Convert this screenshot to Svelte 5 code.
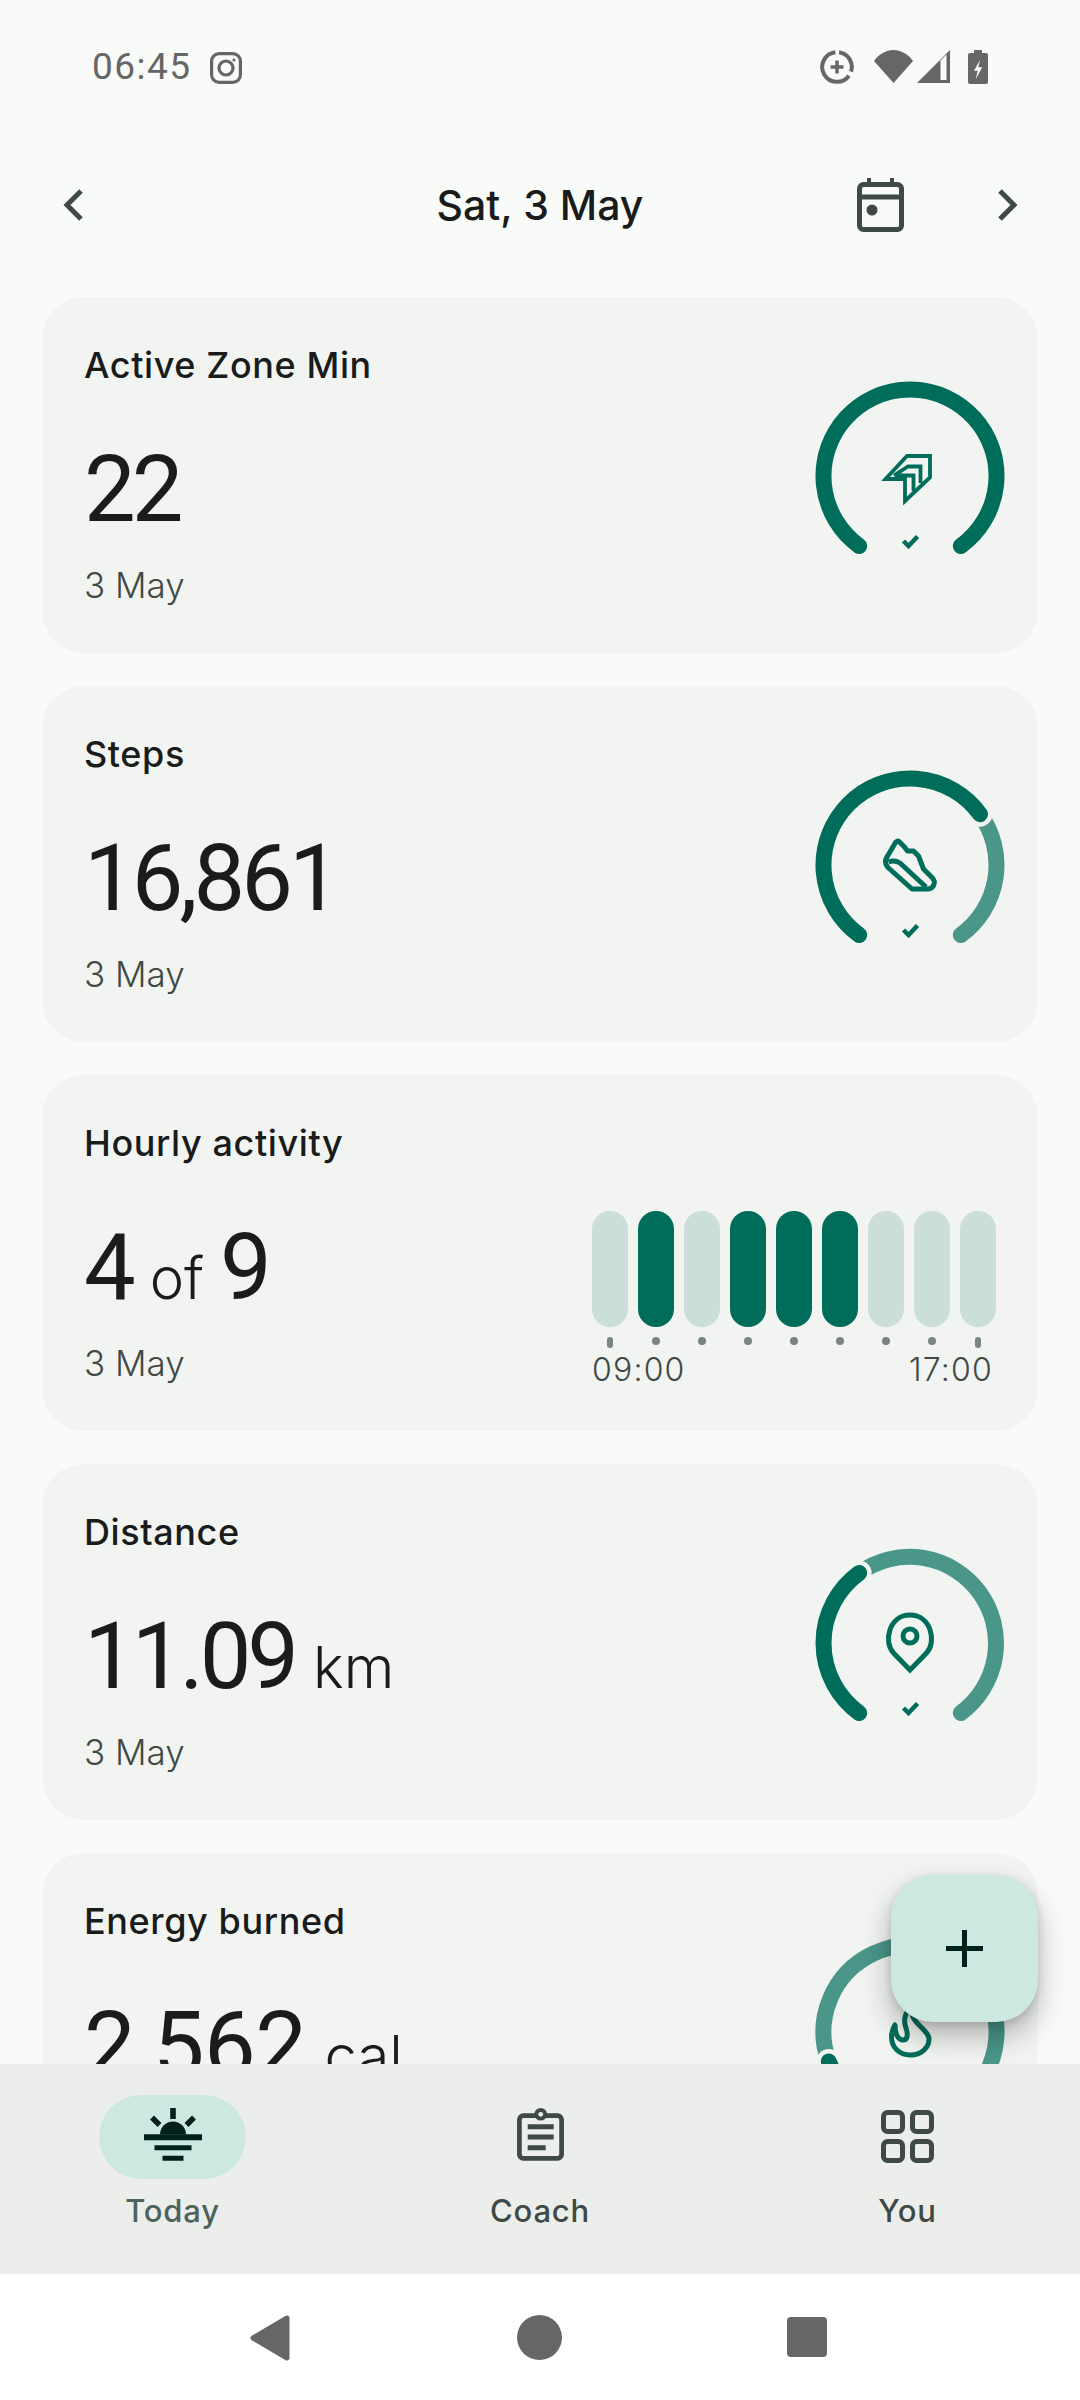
<script>
  const R = 86.5, CX = 95, CY = 95;
  const polar = (cx, cy, r, deg) => {
    const a = (deg * Math.PI) / 180;
    return [cx + r * Math.sin(a), cy - r * Math.cos(a)];
  };
  const pt = (deg) => polar(CX, CY, R, deg);
  const arcOf = (cx, cy, r, from, to) => {
    const [x1, y1] = polar(cx, cy, r, from);
    const [x2, y2] = polar(cx, cy, r, to);
    return `M${x1.toFixed(2)} ${y1.toFixed(2)}A${r} ${r} 0 ${to - from > 180 ? 1 : 0} 1 ${x2.toFixed(2)} ${y2.toFixed(2)}`;
  };
  const arc = (from, to) => arcOf(CX, CY, R, from, to);
  const START = -144, END = 144;
  const bars = [0, 1, 0, 1, 1, 1, 0, 0, 0];
  const cards = [
    { title: 'Active Zone Min', value: '22', unit: '', split: 144, icon: 'zone' },
    { title: 'Steps', value: '16,861', unit: '', split: 54, icon: 'shoe' },
    { title: 'Hourly activity', value: '4', unit: 'of', extra: '9', hourly: true },
    { title: 'Distance', value: '11.09', unit: 'km', split: -36, icon: 'pin' },
    { title: 'Energy burned', value: '2,562', unit: 'cal', split: -110, icon: 'flame', wide: true }
  ];
</script>

<div class="screen">
  <div class="status">
    <div class="status-left">
      <span class="time">06:45</span>
      <svg class="ig" viewBox="0 0 32 32" fill="none" stroke="#666" stroke-width="3.2">
        <rect x="1.6" y="1.6" width="28.8" height="28.8" rx="7.5" />
        <circle cx="16" cy="16" r="7" />
        <circle cx="24" cy="8" r="1.6" fill="#666" stroke="none" />
      </svg>
    </div>
    <div class="status-right">
      <svg class="st-saver" viewBox="0 0 34 34" fill="none" stroke="#666">
        <path d={arcOf(17, 17, 14.8, 8, 108)} stroke-width="4" />
        <path d={arcOf(17, 17, 14.8, 126, 354)} stroke-width="4" />
        <path d="M17 10.500v13M10.500 17h13" stroke-width="3.500" />
      </svg>
      <svg class="st-wifi" viewBox="0 0 39 33"><path d="M19.500 33 0 11C5 4 12 0 19.500 0S34 4 39 11z" fill="#666" /></svg>
      <svg class="st-signal" viewBox="0 0 33 33"><path d="M33 0v33H0z" fill="#666" /><path d="M23.500 10.500l6-6V30h-6z" fill="#f9fbf8" /></svg>
      <svg class="st-batt" viewBox="0 0 20 34">
        <path d="M6 0h8v3h4a2 2 0 0 1 2 2v27a2 2 0 0 1-2 2H2a2 2 0 0 1-2-2V5a2 2 0 0 1 2-2h4z" fill="#666" />
        <path d="M12 10 6 20.700h3.700l-2 8.600 6.600-12h-4z" fill="#f9fbf8" />
      </svg>
    </div>
  </div>

  <header class="datebar">
    <svg class="chev" viewBox="0 0 20 32" fill="none" stroke="#3f4946" stroke-width="5"><path d="M18 2 4 16l14 14" /></svg>
    <div class="date">Sat, 3 May</div>
    <svg class="cal" viewBox="0 0 47 54" fill="none" stroke="#3f4946">
      <path d="M12 0v8M35 0v8" stroke-width="4" />
      <rect x="2.500" y="6.500" width="42" height="45" rx="4" stroke-width="5" />
      <path d="M2 19h43" stroke-width="5" />
      <circle cx="15" cy="32" r="5.500" fill="#3f4946" stroke="none" />
    </svg>
    <svg class="chev" viewBox="0 0 20 32" fill="none" stroke="#3f4946" stroke-width="5"><path d="M2 2l14 14L2 30" /></svg>
  </header>

  <main class="list">
    {#each cards as c}
      <section class="card">
        <div class="text">
          <div class="title">{c.title}</div>
          <div class="value">
            <span class="big" class:wide={c.wide}>{c.value}</span>{#if c.unit}<span class="unit">{c.unit}</span>{/if}{#if c.extra}<span class="big">{c.extra}</span>{/if}
          </div>
          <div class="day">3 May</div>
        </div>
        {#if c.hourly}
          <div class="hours">
            <div class="bars">
              {#each bars as b}<span class="bar" class:on={b}></span>{/each}
            </div>
            <div class="ticks">
              {#each bars as _, i}<span class="tick" class:long={i === 0 || i === 8}></span>{/each}
            </div>
            <div class="hlabels"><span>09:00</span><span>17:00</span></div>
          </div>
        {:else}
          <svg class="gauge" viewBox="0 0 190 190" fill="none">
            {#if c.split < END}
              <path d={arc(c.split, END)} stroke="#4a9688" stroke-width="16" stroke-linecap="round" />
              <circle cx={pt(c.split)[0]} cy={pt(c.split)[1]} r="12.500" fill="#f2f4f1" />
            {/if}
            <path d={arc(START, c.split)} stroke="#006d5b" stroke-width="16" stroke-linecap="round" />
            {#if c.icon === 'zone'}
              <g stroke="#006d5b" stroke-width="3.800">
                <path d="M115 75H92L70.500 98H90v22l25-23.500z" />
                <path d="M79 94.500 93 85.500h12.500V102M80 94.500h18.500V110" />
              </g>
            {:else if c.icon === 'shoe'}
              <g stroke="#006d5b" stroke-width="5" stroke-linejoin="round">
                <path d="M84 71.500 89.500 77 92.500 81H98.500L103.500 86 108.500 99 117 107.500C121.500 112 119 119 112 119H97L73 97.500C70 94 70 90 72 87L80.500 72.500C81.500 71 83 70.500 84 71.500z" />
                <path d="M73.500 92C77 90.500 81 90.500 85 93L111 117" />
              </g>
            {:else if c.icon === 'pin'}
              <g stroke="#006d5b" stroke-width="5">
                <path d="M95 122 78.500 105C68 94 74 67 95 67S122 94 111.500 105z" stroke-linejoin="miter" />
                <circle cx="95" cy="88" r="7" />
              </g>
            {:else}
              <path d="M95.500 118C84 118 76.500 110 76.500 100 76.500 95 78 91 80 88 80 97 83 103 88 103 93 103 93 97 91 91 88 83 90 76 96 70 96 80 100 84 106 90 111 95 114 98 114 102 114 111 106 118 95.500 118z" stroke="#006d5b" stroke-width="5" stroke-linejoin="round" />
            {/if}
            <path d="M88.500 160l5 5 9-9.500" stroke="#006d5b" stroke-width="4.500" />
          </svg>
        {/if}
      </section>
    {/each}
  </main>

  <button class="fab" aria-label="Add">
    <svg viewBox="0 0 37 37" fill="none" stroke="#00201a" stroke-width="5"><path d="M18.500 0v37M0 18.500h37" /></svg>
  </button>

  <nav class="tabs">
    <div class="tab active">
      <div class="pill">
        <svg viewBox="0 0 58 53" fill="#00201a">
          <path d="M26.200 0h5.600v11h-5.600z" />
          <path d="M8 9.500 15.500 17M50 9.500 42.500 17" stroke="#00201a" stroke-width="5.500" />
          <path d="M16 26.500a13 13 0 0 1 26 0z" />
          <path d="M0 26.300h58v6H0zM10.500 37.300h37v5h-37zM18.500 47.700h21v5h-21z" />
        </svg>
      </div>
      <span>Today</span>
    </div>
    <div class="tab">
      <div class="plain">
        <svg class="coach" viewBox="0 0 47 53" fill="none" stroke="#3f4946" stroke-width="4.700">
          <rect x="2.400" y="7.700" width="42.200" height="42.600" rx="4" />
          <circle cx="23.700" cy="6.300" r="6.300" fill="#3f4946" stroke="none" />
          <circle cx="23.700" cy="6.300" r="2.400" fill="#eceeeb" stroke="none" />
          <path d="M10.700 18.800h26M10.700 29h26M10.700 39.800h18" stroke-width="5" />
        </svg>
      </div>
      <span>Coach</span>
    </div>
    <div class="tab">
      <div class="plain">
        <svg class="you" viewBox="0 0 53 53" fill="none" stroke="#3f4946" stroke-width="5">
          <rect x="2.500" y="2.500" width="19" height="19" rx="4" /><rect x="31.500" y="2.500" width="19" height="19" rx="4" />
          <rect x="2.500" y="31.500" width="19" height="19" rx="4" /><rect x="31.500" y="31.500" width="19" height="19" rx="4" />
        </svg>
      </div>
      <span>You</span>
    </div>
  </nav>

  <footer class="sysnav">
    <svg class="s-back" viewBox="0 0 40 46"><path d="M37 3 3 23l34 20z" fill="#666" stroke="#666" stroke-width="5" stroke-linejoin="round" /></svg>
    <span class="s-home"></span>
    <span class="s-square"></span>
  </footer>
</div>

<style>
  :global(body) { margin: 0; background: #f9fbf8; }
  .screen {
    position: relative; width: 1080px; height: 2400px; overflow: hidden;
    background: #f9fbf8; font-family: Inter, sans-serif; color: #191c1b;
    display: flex; flex-direction: column;
  }
  .status { height: 135px; display: flex; justify-content: space-between; padding: 50px 92px 0 92px; box-sizing: border-box; flex: none; }
  .status-left { display: flex; align-items: flex-start; gap: 18px; }
  .time { font-family: Roboto, sans-serif; font-size: 37px; line-height: 34px; color: #666; letter-spacing: 1.500px; }
  .ig { width: 32px; height: 32px; margin-top: 2px; }
  .status-right { display: flex; align-items: flex-start; }
  .st-saver { width: 34px; height: 34px; margin-right: 20px; }
  .st-wifi { width: 39px; height: 33px; margin-right: 4px; }
  .st-signal { width: 33px; height: 33px; margin-right: 18px; }
  .st-batt { width: 20px; height: 34px; }
  .datebar { height: 140px; flex: none; display: flex; align-items: center; padding: 0 62px 0 63px; box-sizing: border-box; position: relative; margin-bottom: 22px; }
  .chev { width: 20px; height: 32px; }
  .date { position: absolute; left: 0; right: 0; text-align: center; font-size: 41px; font-weight: 500; }
  .cal { width: 47px; height: 54px; margin-left: auto; margin-right: 94px; }
  .list { display: flex; flex-direction: column; gap: 33px; padding: 0 42px; }
  .card { flex: none; height: 356px; border-radius: 42px; background: #f2f4f1; display: flex; justify-content: space-between; box-sizing: border-box; padding: 0 33.5px 0 42px; position: relative; }
  .text { padding-top: 48px; }
  .title { font-size: 36px; line-height: 40px; font-weight: 500; letter-spacing: 0.600px; }
  .value { margin-top: 60px; height: 90px; display: flex; align-items: baseline; }
  .big { font-family: Roboto, sans-serif; font-size: 92px; line-height: 90px; font-weight: 400; letter-spacing: -4px; }
  .big.wide { letter-spacing: -0.500px; }
  .unit { font-size: 58px; font-weight: 300; margin: 0 16px 0 18px; }
  .day { font-size: 35px; font-weight: 300; line-height: 40px; color: #3f4946; margin-top: 30px; }
  .gauge { width: 190px; height: 190px; margin-top: 83.5px; flex: none; }
  .hours { width: 404px; flex: none; padding-top: 136px; margin-right: 8.5px; }
  .bars { display: flex; gap: 10px; }
  .bar { flex: none; width: 36px; height: 116px; border-radius: 18px; background: #cbded9; }
  .bar.on { background: #006d5b; }
  .ticks { display: flex; gap: 10px; height: 12px; margin-top: 10px; }
  .tick { width: 36px; position: relative; }
  .tick::after { content: ''; position: absolute; left: 14px; top: 0; width: 8px; height: 8px; border-radius: 50%; background: #7a8480; }
  .tick.long::after { left: 15px; width: 6px; height: 11px; border-radius: 3px; }
  .hlabels { display: flex; justify-content: space-between; margin-top: 4px; padding-right: 3px; font-size: 32px; font-weight: 300; letter-spacing: 1.200px; line-height: 34px; color: #3f4946; }
  .fab { position: absolute; left: 891px; top: 1875px; width: 147px; height: 147px; border: 0; padding: 0; border-radius: 42px; background: #cde8e1; box-shadow: 0 14px 30px rgba(0,0,0,.28), 0 3px 8px rgba(0,0,0,.12); display: flex; align-items: center; justify-content: center; z-index: 3; }
  .fab svg { width: 37px; height: 37px; }
  .tabs { position: absolute; left: 0; top: 2064px; width: 100%; height: 210px; background: #eceeeb; display: grid; grid-template-columns: repeat(3, 367.5px); justify-content: center; padding-top: 31px; box-sizing: border-box; z-index: 2; }
  .tab { display: flex; flex-direction: column; align-items: center; font-size: 31px; font-weight: 500; letter-spacing: 0.800px; color: #3f4946; }
  .tab.active { color: #4d635c; }
  .tab span { margin-top: 11px; line-height: 42px; }
  .pill, .plain { width: 147px; height: 84px; border-radius: 42px; display: flex; align-items: center; justify-content: center; }
  .pill { background: #cde8e1; }
  .pill svg { width: 58px; height: 53px; margin-bottom: 5px; }
  .coach { width: 47px; height: 53px; margin-bottom: 5px; }
  .you { width: 53px; height: 53px; margin-bottom: 1px; }
  .sysnav { position: absolute; left: 0; top: 2274px; width: 100%; height: 126px; background: #fff; z-index: 2; }
  .s-back { position: absolute; left: 250px; top: 41px; width: 40px; height: 46px; }
  .s-home { position: absolute; left: 517px; top: 41px; width: 45px; height: 45px; border-radius: 50%; background: #666; }
  .s-square { position: absolute; left: 787px; top: 43px; width: 40px; height: 40px; border-radius: 4px; background: #666; }
</style>
